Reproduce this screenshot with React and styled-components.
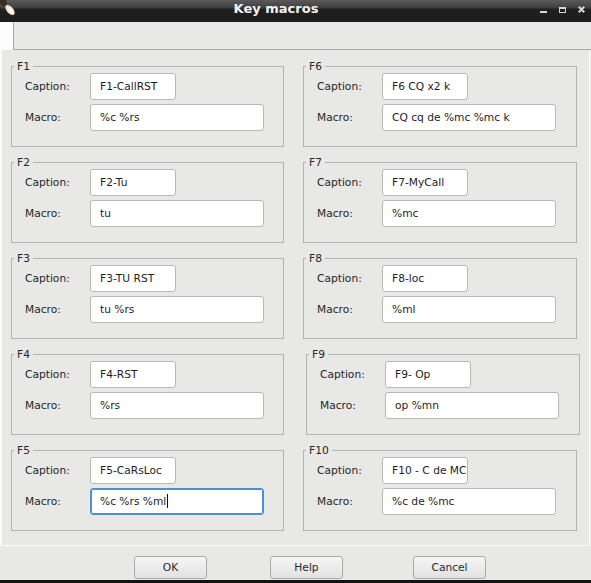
import React from 'react';
import styled, { createGlobalStyle } from 'styled-components';

const Global = createGlobalStyle`
  html, body { margin: 0; padding: 0; background: #e8e8e7; }
  body {
    font-family: "DejaVu Sans", "Noto Sans", sans-serif;
    font-size: 10.67px;
    color: #262626;
  }
`;

const Window = styled.div`
  width: 591px;
  height: 583px;
  display: flex;
  flex-direction: column;
  background: #e8e8e7;
  overflow: hidden;
`;

const TitleBar = styled.div`
  position: relative;
  height: 22px;
  flex: none;
  display: flex;
  align-items: flex-start;
  background: linear-gradient(#5a5a5a 0px, #3e3e3e 8px, #202020 9px, #1c1c1c 22px);
`;

const AppIcon = styled.svg`
  position: absolute;
  left: 0;
  top: 0;
`;

const TitleText = styled.div`
  flex: 1;
  padding-left: 12px;
  text-align: center;
  font-size: 13px;
  font-weight: bold;
  line-height: 18px;
  color: #f4f4f4;
`;

const Controls = styled.div`
  display: flex;
  gap: 12px;
  padding: 6px 6px 0 0;
`;

const TabStrip = styled.div`
  height: 28px;
  flex: none;
  display: flex;
`;

const Tab = styled.div`
  width: 13px;
  background: #fdfdfd;
  border-right: 1px solid #a9a9a9;
  border-top-right-radius: 2px;
`;

const TabFiller = styled.div`
  flex: 1;
  border-bottom: 1px solid #a9a9a9;
`;

const Panel = styled.div`
  flex: 1;
  min-height: 0;
  margin-right: 1px;
  border-left: 2px solid #fbfbfb;
  border-right: 1px solid #fbfbfb;
  border-bottom: 1px solid #fbfbfb;
  padding: 10px 0 0 9px;
  display: grid;
  grid-template-columns: 273px 274px;
  column-gap: 19px;
  align-content: start;
`;

const Column = styled.div`
  display: flex;
  flex-direction: column;
  gap: 9px;
`;

const Group = styled.fieldset`
  margin: 0;
  margin-left: ${p => (p.$shift ? 3 : 0)}px;
  margin-right: ${p => (p.$shift ? -3 : 0)}px;
  padding: 0;
  min-width: 0;
  border: 1px solid #b3b3b3;
`;

const Legend = styled.legend`
  margin-left: 2px;
  padding: 0 3px;
  font-size: 10.67px;
  line-height: 13px;
`;

const Fields = styled.div`
  display: grid;
  grid-template-columns: 65px auto;
  row-gap: 4px;
  align-items: center;
  justify-items: start;
  padding: 0 0 15px 13px;
`;

const Label = styled.span`
  font-size: 10.67px;
`;

const Entry = styled.div`
  box-sizing: border-box;
  width: ${p => (p.$wide ? 174 : 86)}px;
  height: 27px;
  padding-left: 9px;
  border: 1px solid ${p => (p.$focused ? '#4a8fd8' : '#b8b8b8')};
  box-shadow: ${p => (p.$focused ? 'inset 0 0 0 1px #4a8fd8' : 'none')};
  border-radius: 3px;
  background: #ffffff;
  line-height: 25px;
  white-space: nowrap;
  overflow: hidden;
  color: #1e1e1e;
`;

const Caret = styled.span`
  display: inline-block;
  width: 1px;
  height: 14px;
  margin-left: 1px;
  background: #111;
  vertical-align: -3px;
`;

const ButtonBar = styled.div`
  height: 34px;
  flex: none;
  display: flex;
  align-items: flex-start;
  padding: 10px 0 0 134px;
  box-sizing: border-box;
`;

const Button = styled.button`
  width: 73px;
  height: 23px;
  margin-left: ${p => p.$offset || 0}px;
  padding: 0;
  border: 1px solid #ababab;
  border-radius: 3px;
  background: linear-gradient(#f6f6f6, #e2e2e2);
  font-family: "DejaVu Sans", "Noto Sans", sans-serif;
  font-size: 10.67px;
  color: #2a2a2a;
`;

const Taskbar = styled.div`
  height: 3px;
  flex: none;
  background: #121212;
`;

const left = [
  { key: 'F1', caption: 'F1-CallRST', macro: '%c %rs' },
  { key: 'F2', caption: 'F2-Tu', macro: 'tu' },
  { key: 'F3', caption: 'F3-TU RST', macro: 'tu %rs' },
  { key: 'F4', caption: 'F4-RST', macro: '%rs' },
  { key: 'F5', caption: 'F5-CaRsLoc', macro: '%c %rs %ml', focused: true },
];

const right = [
  { key: 'F6', caption: 'F6 CQ x2 k', macro: 'CQ cq de %mc %mc k' },
  { key: 'F7', caption: 'F7-MyCall', macro: '%mc' },
  { key: 'F8', caption: 'F8-loc', macro: '%ml' },
  { key: 'F9', caption: 'F9- Op', macro: 'op %mn', shift: true },
  { key: 'F10', caption: 'F10 - C de MC', macro: '%c de %mc' },
];

function MacroGroup({ item }) {
  return (
    <Group $shift={item.shift}>
      <Legend>{item.key}</Legend>
      <Fields>
        <Label>Caption:</Label>
        <Entry>{item.caption}</Entry>
        <Label>Macro:</Label>
        <Entry $wide $focused={item.focused}>
          {item.macro}
          {item.focused && <Caret />}
        </Entry>
      </Fields>
    </Group>
  );
}

export default function App() {
  return (
    <>
      <Global />
      <Window>
        <TitleBar>
          <AppIcon width="16" height="16" viewBox="0 0 16 16">
            <ellipse cx="10" cy="10" rx="3.2" ry="6" transform="rotate(-42 10 10)" fill="#ece3d2" />
            <ellipse cx="11" cy="11" rx="1.6" ry="3.5" transform="rotate(-42 11 11)" fill="#fbf8f0" />
            <path d="M0 0 L6 0 L7 4 L4 6 L0 4 Z" fill="#3b2a1e" />
          </AppIcon>
          <TitleText>Key macros</TitleText>
          <Controls>
            <svg width="7" height="8" viewBox="0 0 7 8">
              <rect x="0" y="5" width="7" height="2" fill="#d6d6d6" />
            </svg>
            <svg width="7" height="8" viewBox="0 0 7 8">
              <rect x="0.5" y="1.5" width="6" height="5" fill="none" stroke="#d6d6d6" strokeWidth="1" />
              <rect x="0" y="1" width="7" height="2" fill="#d6d6d6" />
            </svg>
            <svg width="7" height="8" viewBox="0 0 7 8">
              <path d="M0.8 0.8 L6.2 6.2 M6.2 0.8 L0.8 6.2" stroke="#d6d6d6" strokeWidth="2" />
            </svg>
          </Controls>
        </TitleBar>
        <TabStrip>
          <Tab />
          <TabFiller />
        </TabStrip>
        <Panel>
          <Column>
            {left.map(item => (
              <MacroGroup key={item.key} item={item} />
            ))}
          </Column>
          <Column>
            {right.map(item => (
              <MacroGroup key={item.key} item={item} />
            ))}
          </Column>
        </Panel>
        <ButtonBar>
          <Button>OK</Button>
          <Button $offset={63}>Help</Button>
          <Button $offset={70}>Cancel</Button>
        </ButtonBar>
        <Taskbar />
      </Window>
    </>
  );
}
